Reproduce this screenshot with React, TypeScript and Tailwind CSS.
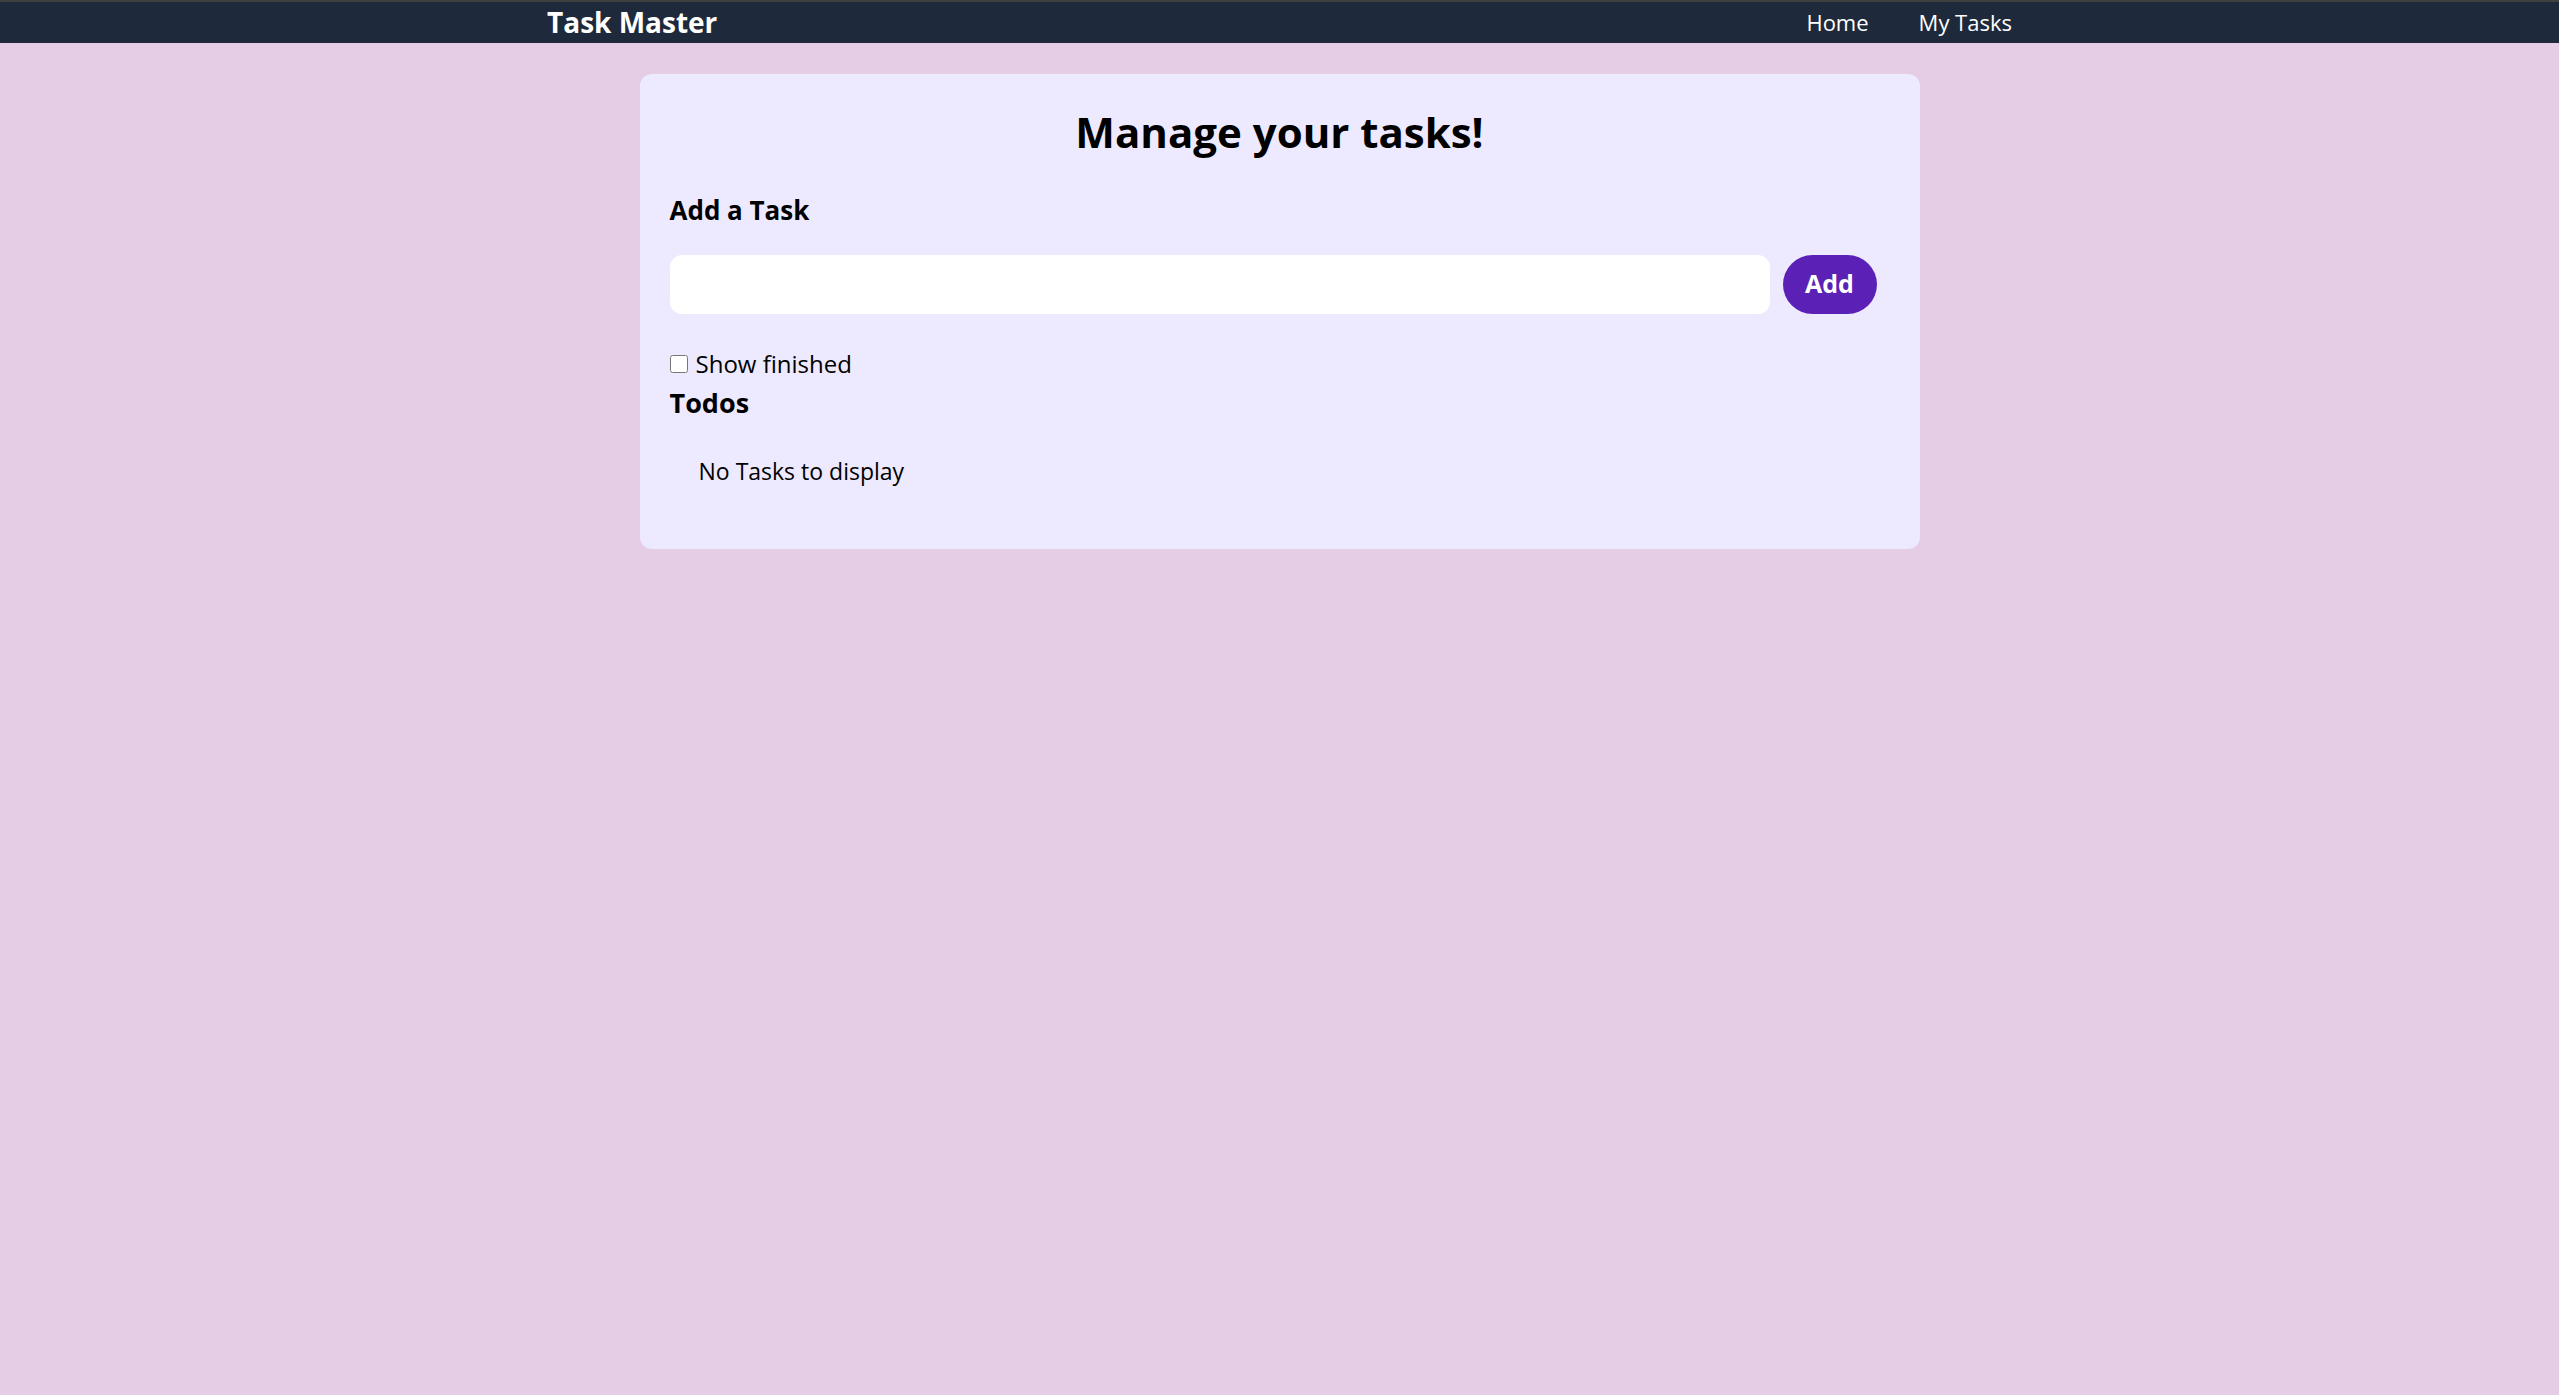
import { useState } from "react";

const App = () => {
  const [task, setTask] = useState("");
  const [showFinished, setShowFinished] = useState(false);

  return (
    <div className="min-h-screen bg-[#e5cde5] font-['Open_Sans',_'Noto_Sans',_sans-serif] text-black">
      {/* Navbar */}
      <nav className="h-[43px] border-t-2 border-[#404040] bg-[#1e293b] text-white">
        <div className="mx-auto flex h-full w-[1465px] items-center justify-between pb-[2px]">
          <span className="text-[28px] font-bold leading-none">Task Master</span>
          <ul className="flex gap-[50px] text-[22px] leading-none">
            <li className="cursor-pointer">Home</li>
            <li className="cursor-pointer">My Tasks</li>
          </ul>
        </div>
      </nav>

      {/* Card */}
      <main className="pt-[31px]">
        <div className="mx-auto w-[1280px] rounded-xl bg-[#ede9fe] px-[30px] pt-[33px] pb-[61px]">
          <h1 className="text-center text-[42px] font-bold leading-[50px]">Manage your tasks!</h1>

          <h2 className="mt-[37px] text-[26px] font-bold leading-tight">Add a Task</h2>
          <div className="mt-[28px] mr-[13px] flex gap-[13px]">
            <input
              type="text"
              value={task}
              onChange={(e) => setTask(e.target.value)}
              className="h-[59px] flex-1 rounded-xl bg-white px-4 text-[24px] outline-none"
            />
            <button className="h-[59px] w-[94px] rounded-full bg-[#5b21b6] text-[25px] font-bold text-white">
              Add
            </button>
          </div>

          <label className="mt-[32px] flex items-center gap-[8px] text-[24px] leading-normal">
            <input
              type="checkbox"
              checked={showFinished}
              onChange={() => setShowFinished(!showFinished)}
              className="h-[18px] w-[18px]"
            />
            Show finished
          </label>

          <h2 className="mt-[3px] text-[27px] font-bold leading-[36px]">Todos</h2>
          <div className="mt-[33px] pl-[29px] text-[23px] leading-normal">No Tasks to display</div>
        </div>
      </main>
    </div>
  );
};

export default App;
